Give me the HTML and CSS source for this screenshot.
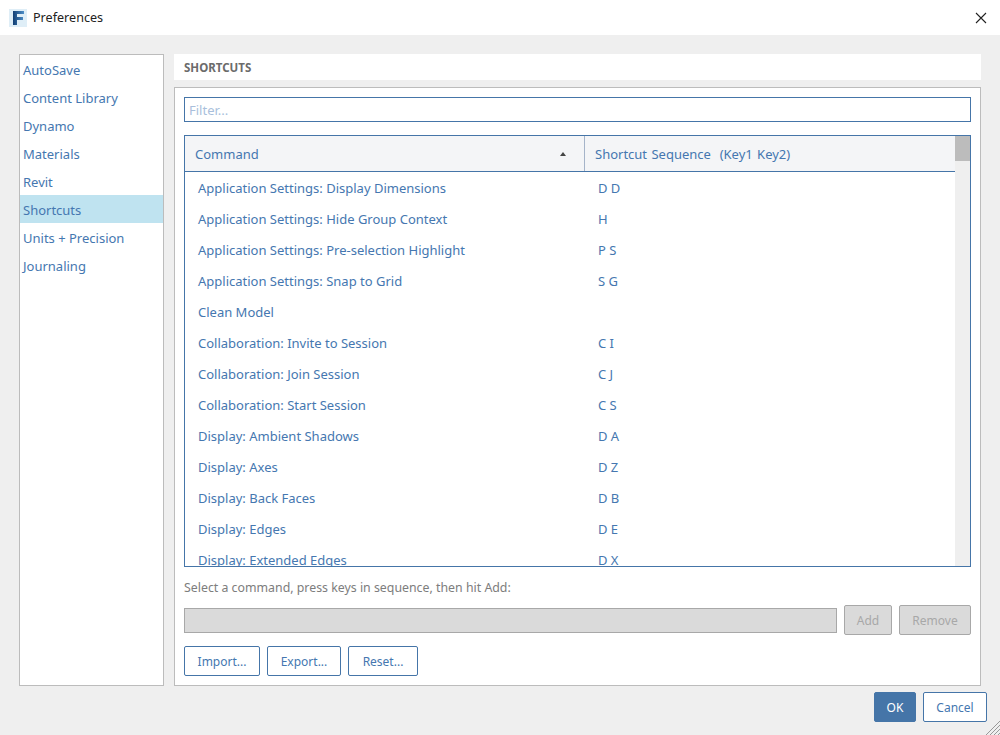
FILE: index.html
```html
<!DOCTYPE html>
<html lang="en">
<head>
  <meta charset="UTF-8" />
  <title>Preferences</title>
  <link rel="stylesheet" href="styles.css">
</head>
<body>
  <div class="titlebar">
    <svg class="app-icon" width="18" height="18" viewBox="0 0 18 18">
      <defs>
        <linearGradient id="fgrad" x1="0" x2="1" y1="0" y2="0">
          <stop offset="0" stop-color="#123f74"/>
          <stop offset="1" stop-color="#4f8fc8"/>
        </linearGradient>
      </defs>
      <rect x="0" y="0" width="18" height="18" fill="#dfeef7"/>
      <path d="M4 2H15V5H8V8H14V11H8V16H4Z" fill="url(#fgrad)"/>
    </svg>
    <span class="title">Preferences</span>
    <svg class="close" width="12" height="12" viewBox="0 0 12 12">
      <path d="M1 1L11 11M11 1L1 11" stroke="#222" stroke-width="1.1" fill="none"/>
    </svg>
  </div>

  <div class="main">
    <ul class="sidebar">
      <li>AutoSave</li>
      <li>Content Library</li>
      <li>Dynamo</li>
      <li>Materials</li>
      <li>Revit</li>
      <li class="active">Shortcuts</li>
      <li>Units + Precision</li>
      <li>Journaling</li>
    </ul>

    <div class="content">
      <div class="heading">SHORTCUTS</div>
      <div class="panel">
        <input class="filter" type="text" placeholder="Filter..." />

        <div class="table">
          <div class="table-main">
            <div class="thead">
              <div class="th th-command">Command <span class="sort"></span></div>
              <div class="th th-seq">Shortcut Sequence&nbsp; (Key1 Key2)</div>
            </div>
            <div class="tbody">
              <div class="row"><span class="cmd">Application Settings: Display Dimensions</span><span>D D</span></div>
              <div class="row"><span class="cmd">Application Settings: Hide Group Context</span><span>H</span></div>
              <div class="row"><span class="cmd">Application Settings: Pre-selection Highlight</span><span>P S</span></div>
              <div class="row"><span class="cmd">Application Settings: Snap to Grid</span><span>S G</span></div>
              <div class="row"><span class="cmd">Clean Model</span><span></span></div>
              <div class="row"><span class="cmd">Collaboration: Invite to Session</span><span>C I</span></div>
              <div class="row"><span class="cmd">Collaboration: Join Session</span><span>C J</span></div>
              <div class="row"><span class="cmd">Collaboration: Start Session</span><span>C S</span></div>
              <div class="row"><span class="cmd">Display: Ambient Shadows</span><span>D A</span></div>
              <div class="row"><span class="cmd">Display: Axes</span><span>D Z</span></div>
              <div class="row"><span class="cmd">Display: Back Faces</span><span>D B</span></div>
              <div class="row"><span class="cmd">Display: Edges</span><span>D E</span></div>
              <div class="row"><span class="cmd">Display: Extended Edges</span><span>D X</span></div>
            </div>
          </div>
          <div class="scrollbar"><div class="thumb"></div></div>
        </div>

        <div class="hint">Select a command, press keys in sequence, then hit Add:</div>

        <div class="key-row">
          <div class="key-input"></div>
          <button class="btn btn-disabled btn-add">Add</button>
          <button class="btn btn-disabled btn-remove">Remove</button>
        </div>

        <div class="file-row">
          <button class="btn btn-import">Import...</button>
          <button class="btn btn-export">Export...</button>
          <button class="btn btn-reset">Reset...</button>
        </div>
      </div>
    </div>
  </div>

  <div class="footer">
    <button class="btn btn-ok">OK</button>
    <button class="btn btn-cancel">Cancel</button>
    <svg class="grip" width="14" height="14" viewBox="0 0 14 14">
      <path d="M14 0L0 14M14 4L4 14M14 8L8 14M14 12L12 14" stroke="#999" stroke-width="1" fill="none"/>
    </svg>
  </div>
</body>
</html>
```

FILE: styles.css
```css
* {
  box-sizing: border-box;
}
body {
  margin: 0;
  width: 1000px;
  height: 735px;
  overflow: hidden;
  display: flex;
  flex-direction: column;
  background-color: #efefef;
  font-family: "Noto Sans", "Open Sans", sans-serif;
  font-size: 13px;
  color: #4577b0;
}
.titlebar {
  height: 35px;
  flex: none;
  background: white;
  display: flex;
  align-items: center;
  padding: 0 13px 0 9px;
}
.app-icon {
  margin-right: 6px;
}
.title {
  color: #222;
  flex: 1;
  font-size: 12.6px;
}
.main {
  height: 651px;
  flex: none;
  display: flex;
  gap: 10px;
  padding: 19px 19px 0 19px;
}
.sidebar {
  width: 145px;
  list-style: none;
  margin: 0;
  padding: 0;
  background: white;
  border: 1px solid #bcbcbc;
}
.sidebar li {
  height: 28px;
  line-height: 27px;
  padding: 2px 0 0 3px;
}
.sidebar .active {
  background-color: #bfe3f0;
}
.content {
  flex: 1;
  display: flex;
  flex-direction: column;
  gap: 7px;
}
.heading {
  height: 26px;
  flex: none;
  background: white;
  padding-left: 10px;
  line-height: 28px;
  font-size: 11.5px;
  font-weight: bold;
  color: #6b6b6b;
}
.panel {
  flex: 1;
  background: white;
  border: 1px solid #bcbcbc;
  padding: 9px;
  display: flex;
  flex-direction: column;
}
.filter {
  height: 25px;
  flex: none;
  width: 100%;
  border: 1px solid #4575a8;
  padding: 0 4px;
  font: inherit;
  outline: none;
}
.filter::placeholder {
  color: #a9bfdc;
}
.table {
  height: 432px;
  flex: none;
  margin-top: 13px;
  border: 1px solid #4575a8;
  display: flex;
}
.table-main {
  flex: 1;
  min-width: 0;
  display: flex;
  flex-direction: column;
}
.thead {
  height: 36px;
  flex: none;
  background-color: #f4f5f7;
  border-bottom: 1px solid #4575a8;
  display: flex;
  align-items: stretch;
}
.th {
  display: flex;
  align-items: center;
  padding-left: 10px;
}
.th-command {
  width: 400px;
  border-right: 1px solid #a5b4c9;
  justify-content: space-between;
  padding-right: 18px;
}
.th-seq {
  word-spacing: 1px;
}
.sort {
  width: 0;
  height: 0;
  border-left: 3px solid transparent;
  border-right: 3px solid transparent;
  border-bottom: 4px solid #444;
}
.tbody {
  flex: 1;
  overflow: hidden;
  padding-top: 1px;
}
.row {
  height: 31px;
  display: flex;
  align-items: center;
  line-height: 31px;
}
.cmd {
  width: 413px;
  padding-left: 13px;
}
.scrollbar {
  width: 15px;
  flex: none;
  background-color: #efefef;
}
.thumb {
  height: 25px;
  background-color: #bcbcbc;
}
.hint {
  margin-top: 12px;
  height: 17px;
  line-height: 17px;
  font-size: 12.35px;
  color: #7d7d7d;
}
.key-row {
  margin-top: 9px;
  display: flex;
  align-items: center;
  gap: 7px;
}
.key-input {
  flex: 1;
  height: 25px;
  background-color: #dadada;
  border: 1px solid #a8a8a8;
}
.btn {
  height: 30px;
  padding: 0;
  border: 1px solid #4575a8;
  border-radius: 2px;
  background: white;
  color: #4577b0;
  font: inherit;
  font-size: 12px;
}
.btn-disabled {
  background-color: #dadada;
  border-color: #a8a8a8;
  color: #a8a8a8;
}
.btn-add {
  width: 48px;
}
.btn-remove {
  width: 72px;
}
.file-row {
  margin-top: 11px;
  display: flex;
  gap: 7px;
}
.btn-import {
  width: 76px;
}
.btn-export {
  width: 74px;
}
.btn-reset {
  width: 70px;
}
.footer {
  flex: 1;
  display: flex;
  justify-content: flex-end;
  gap: 7px;
  padding: 6px 13px 0 0;
  position: relative;
}
.btn-ok {
  width: 42px;
  background-color: #4575a8;
  color: white;
}
.btn-cancel {
  width: 64px;
}
.grip {
  position: absolute;
  right: 0;
  bottom: 0;
}
```
